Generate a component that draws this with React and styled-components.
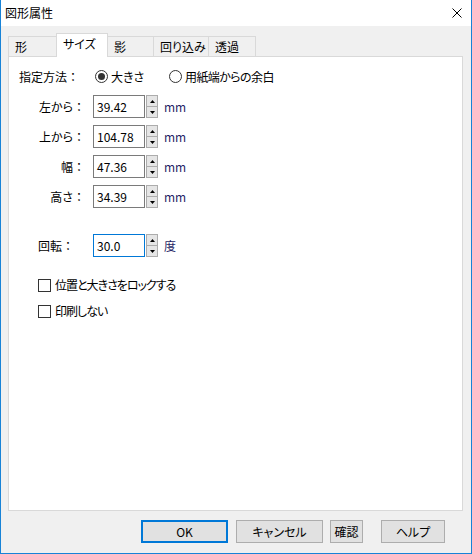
import React from 'react';
import styled, { createGlobalStyle } from 'styled-components';

const Global = createGlobalStyle`
  html, body { margin: 0; padding: 0; background: #fff; }
  body {
    font-family: "Noto Sans CJK JP", "Noto Sans", sans-serif;
    font-size: 12px;
    color: #000;
    font-feature-settings: "palt";
  }
  * { box-sizing: border-box; }
`;

const Window = styled.div`
  width: 472px;
  height: 554px;
  display: flex;
  flex-direction: column;
  border: 1px solid #1883d7;
  border-top: none;
  background: #f0f0f0;
`;

const TitleBar = styled.div`
  flex: none;
  height: 26px;
  background: #fff;
  display: flex;
  align-items: center;
  justify-content: space-between;
  padding: 0 9px 0 4px;
  line-height: 1;
`;

const CloseBtn = styled.div`
  width: 10px;
  height: 10px;
  display: flex;
`;

const Body = styled.div`
  flex: 1;
  display: flex;
  flex-direction: column;
  padding: 7px 8px 10px 7px;
  min-height: 0;
`;

const Tabs = styled.div`
  display: flex;
  align-items: flex-end;
  height: 24px;
  margin-bottom: -1px;
  position: relative;
  z-index: 1;
`;

const Tab = styled.div`
  width: ${p => p.$w}px;
  height: ${p => (p.$active ? 24 : 20)}px;
  margin-bottom: ${p => (p.$active ? 0 : 1)}px;
  margin-left: ${p => (p.$first ? 0 : -1)}px;
  border: 1px solid #d9d9d9;
  border-bottom: none;
  background: ${p => (p.$active ? '#fff' : '#f0f0f0')};
  position: relative;
  z-index: ${p => (p.$active ? 2 : 1)};
  display: flex;
  align-items: center;
  padding: 0 0 ${p => (p.$active ? 3 : 0)}px 6px;
  line-height: 1;
  white-space: nowrap;
`;

const Panel = styled.div`
  flex: 1;
  background: #fff;
  border: 1px solid #d9d9d9;
  padding: 8px 0 0 10px;
`;

const Row = styled.div`
  display: flex;
  align-items: center;
  height: 23px;
  margin-top: ${p => p.$mt || 0}px;
  padding-left: ${p => p.$pl || 0}px;
`;

const Label = styled.div`
  width: ${p => p.$w}px;
  flex: none;
  text-align: ${p => p.$align || 'left'};
  margin-right: ${p => p.$mr || 0}px;
  white-space: nowrap;
  line-height: 1;
`;

const Colon = styled.span`
  font-feature-settings: normal;
`;

const RadioOption = styled.label`
  display: flex;
  align-items: center;
  width: ${p => (p.$w ? `${p.$w}px` : 'auto')};
  white-space: nowrap;
  line-height: 1;
  letter-spacing: ${p => p.$ls || 0}px;
`;

const RadioCircle = styled.span`
  width: 13px;
  height: 13px;
  border: 1px solid #333;
  border-radius: 50%;
  margin-right: 3px;
  display: flex;
  align-items: center;
  justify-content: center;
  flex: none;
  &::after {
    content: '';
    display: ${p => (p.$checked ? 'block' : 'none')};
    width: 7px;
    height: 7px;
    border-radius: 50%;
    background: #333;
  }
`;

const NumBox = styled.div`
  width: 52px;
  height: 23px;
  border: 1px solid ${p => (p.$focus ? '#0078d7' : '#7a7a7a')};
  background: #fff;
  display: flex;
  align-items: center;
  padding-left: 3px;
  line-height: 1;
  flex: none;
`;

const Spinner = styled.div`
  width: 12px;
  height: 23px;
  margin-left: 1px;
  display: flex;
  flex-direction: column;
  flex: none;
`;

const SpinBtn = styled.div`
  flex: 1;
  background: #e5e5e5;
  border: 1px solid #acacac;
  border-top: ${p => (p.$down ? 'none' : '1px solid #acacac')};
  display: flex;
  align-items: center;
  justify-content: center;
`;

const Unit = styled.div`
  margin-left: 6px;
  color: #1f1f66;
  line-height: 1;
  white-space: nowrap;
`;

const CheckRow = styled.label`
  display: flex;
  align-items: center;
  height: 20px;
  margin-left: 19px;
  margin-top: ${p => p.$mt}px;
  line-height: 1;
  white-space: nowrap;
  letter-spacing: -1px;
`;

const CheckBox = styled.span`
  width: 13px;
  height: 13px;
  border: 1px solid #333;
  background: #fff;
  margin-right: 4px;
  flex: none;
`;

const ButtonRow = styled.div`
  display: flex;
  justify-content: flex-end;
  margin-top: 9px;
  padding-right: 18px;
`;

const Button = styled.button`
  width: ${p => p.$w}px;
  height: 23px;
  margin-left: ${p => p.$ml || 0}px;
  background: #e1e1e1;
  border: ${p => (p.$default ? '2px solid #0078d7' : '1px solid #adadad')};
  font-family: inherit;
  font-size: 12px;
  color: #000;
  padding: 0;
  line-height: 1;
  font-feature-settings: "palt";
`;

const Arrow = ({ down }) => (
  <svg width="5" height="3" viewBox="0 0 5 3">
    <path d={down ? 'M0 0H5L2.5 3Z' : 'M0 3H5L2.5 0Z'} fill="#000" />
  </svg>
);

const Field = ({ value, unit, focus }) => (
  <>
    <NumBox $focus={focus}>{value}</NumBox>
    <Spinner>
      <SpinBtn><Arrow /></SpinBtn>
      <SpinBtn $down><Arrow down /></SpinBtn>
    </Spinner>
    <Unit>{unit}</Unit>
  </>
);

const tabs = [
  { t: '形', w: 49 },
  { t: 'サイズ', w: 52, active: true },
  { t: '影', w: 47 },
  { t: '回り込み', w: 56 },
  { t: '透過', w: 48 },
];

const fields = [
  { label: '左から', value: '39.42' },
  { label: '上から', value: '104.78' },
  { label: '幅', value: '47.36' },
  { label: '高さ', value: '34.39' },
];

export default function App() {
  return (
    <>
      <Global />
      <Window>
        <TitleBar>
          <span>図形属性</span>
          <CloseBtn>
            <svg width="10" height="10" viewBox="0 0 10 10">
              <path d="M0.5 0.5L9.5 9.5M9.5 0.5L0.5 9.5" stroke="#000" strokeWidth="1" />
            </svg>
          </CloseBtn>
        </TitleBar>
        <Body>
          <Tabs>
            {tabs.map((tb, i) => (
              <Tab key={tb.t} $w={tb.w} $active={tb.active} $first={i === 0}>
                {tb.t}
              </Tab>
            ))}
          </Tabs>
          <Panel>
            <Row>
              <Label $w={76}>指定方法<Colon>：</Colon></Label>
              <RadioOption $w={74}>
                <RadioCircle $checked />
                大きさ
              </RadioOption>
              <RadioOption $ls={-0.6}>
                <RadioCircle />
                用紙端からの余白
              </RadioOption>
            </Row>
            {fields.map(f => (
              <Row key={f.label} $mt={7}>
                <Label $w={66} $align="right" $mr={8}>{f.label}<Colon>：</Colon></Label>
                <Field value={f.value} unit="mm" />
              </Row>
            ))}
            <Row $mt={26} $pl={19}>
              <Label $w={55}>回転<Colon>：</Colon></Label>
              <Field value="30.0" unit="度" focus />
            </Row>
            <CheckRow $mt={18}>
              <CheckBox />
              位置と大きさをロックする
            </CheckRow>
            <CheckRow $mt={6}>
              <CheckBox />
              印刷しない
            </CheckRow>
          </Panel>
          <ButtonRow>
            <Button $w={87} $default>OK</Button>
            <Button $w={87} $ml={8}>キャンセル</Button>
            <Button $w={33} $ml={7}>確認</Button>
            <Button $w={64} $ml={18}>ヘルプ</Button>
          </ButtonRow>
        </Body>
      </Window>
    </>
  );
}
